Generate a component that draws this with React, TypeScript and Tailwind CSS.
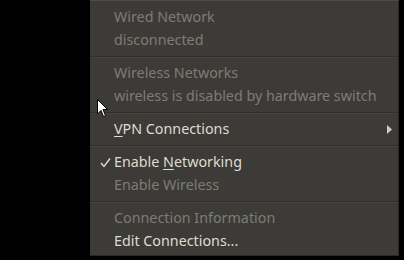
import React from "react";

const Item = ({ children, disabled, check, arrow }: { children: React.ReactNode; disabled?: boolean; check?: boolean; arrow?: boolean }) => (
  <div className={`relative h-[23px] flex items-center pl-[24px] ${disabled ? "text-[#7e7c76]" : "text-[#dfdbd2]"}`}>
    {check && (
      <svg className="absolute left-[10px] top-[6px]" width="11" height="11" viewBox="0 0 11 11">
        <path d="M1 6 L4 9.5 L10 1.5" fill="none" stroke="#dfdbd2" strokeWidth="1.4" />
      </svg>
    )}
    <span>{children}</span>
    {arrow && (
      <svg className="absolute right-[6px] top-[7px]" width="5" height="9" viewBox="0 0 5 9">
        <path d="M0 0 L5 4.5 L0 9 Z" fill="#cfcbc3" />
      </svg>
    )}
  </div>
);

const Sep = () => (
  <div className="h-[10px] flex flex-col justify-center">
    <div className="h-px bg-[#2e2d2a]" />
    <div className="h-px bg-[#45443f]" />
  </div>
);

export default function App() {
  return (
    <div className="relative w-[404px] h-[260px] bg-black flex" style={{ fontFamily: '"Noto Sans", sans-serif' }}>
      <div className="ml-[90px] w-[309px] h-[256px] bg-[#3c3b37] border-t border-[#4d4c47] border-r border-b border-r-[#2a2926] border-b-[#2a2926] pt-[5px] text-[14.3px] leading-none">
        <Item disabled>Wired Network</Item>
        <Item disabled>disconnected</Item>
        <Sep />
        <Item disabled>Wireless Networks</Item>
        <Item disabled>wireless is disabled by hardware switch</Item>
        <Sep />
        <Item arrow>
          <span className="underline underline-offset-2">V</span>PN Connections
        </Item>
        <Sep />
        <Item check>
          Enable <span className="underline underline-offset-2">N</span>etworking
        </Item>
        <Item disabled>Enable Wireless</Item>
        <Sep />
        <Item disabled>Connection Information</Item>
        <Item>Edit Connections...</Item>
      </div>
      <svg className="absolute left-[96px] top-[98px]" width="13" height="21" viewBox="0 0 13 21">
        <path d="M1.5 1.5 L1.5 16 L5 12.5 L7.5 18.5 L9.5 17.5 L7 11.5 L11.5 11.5 Z" fill="#ffffff" stroke="#000000" strokeWidth="1" strokeLinejoin="round" />
      </svg>
    </div>
  );
}
